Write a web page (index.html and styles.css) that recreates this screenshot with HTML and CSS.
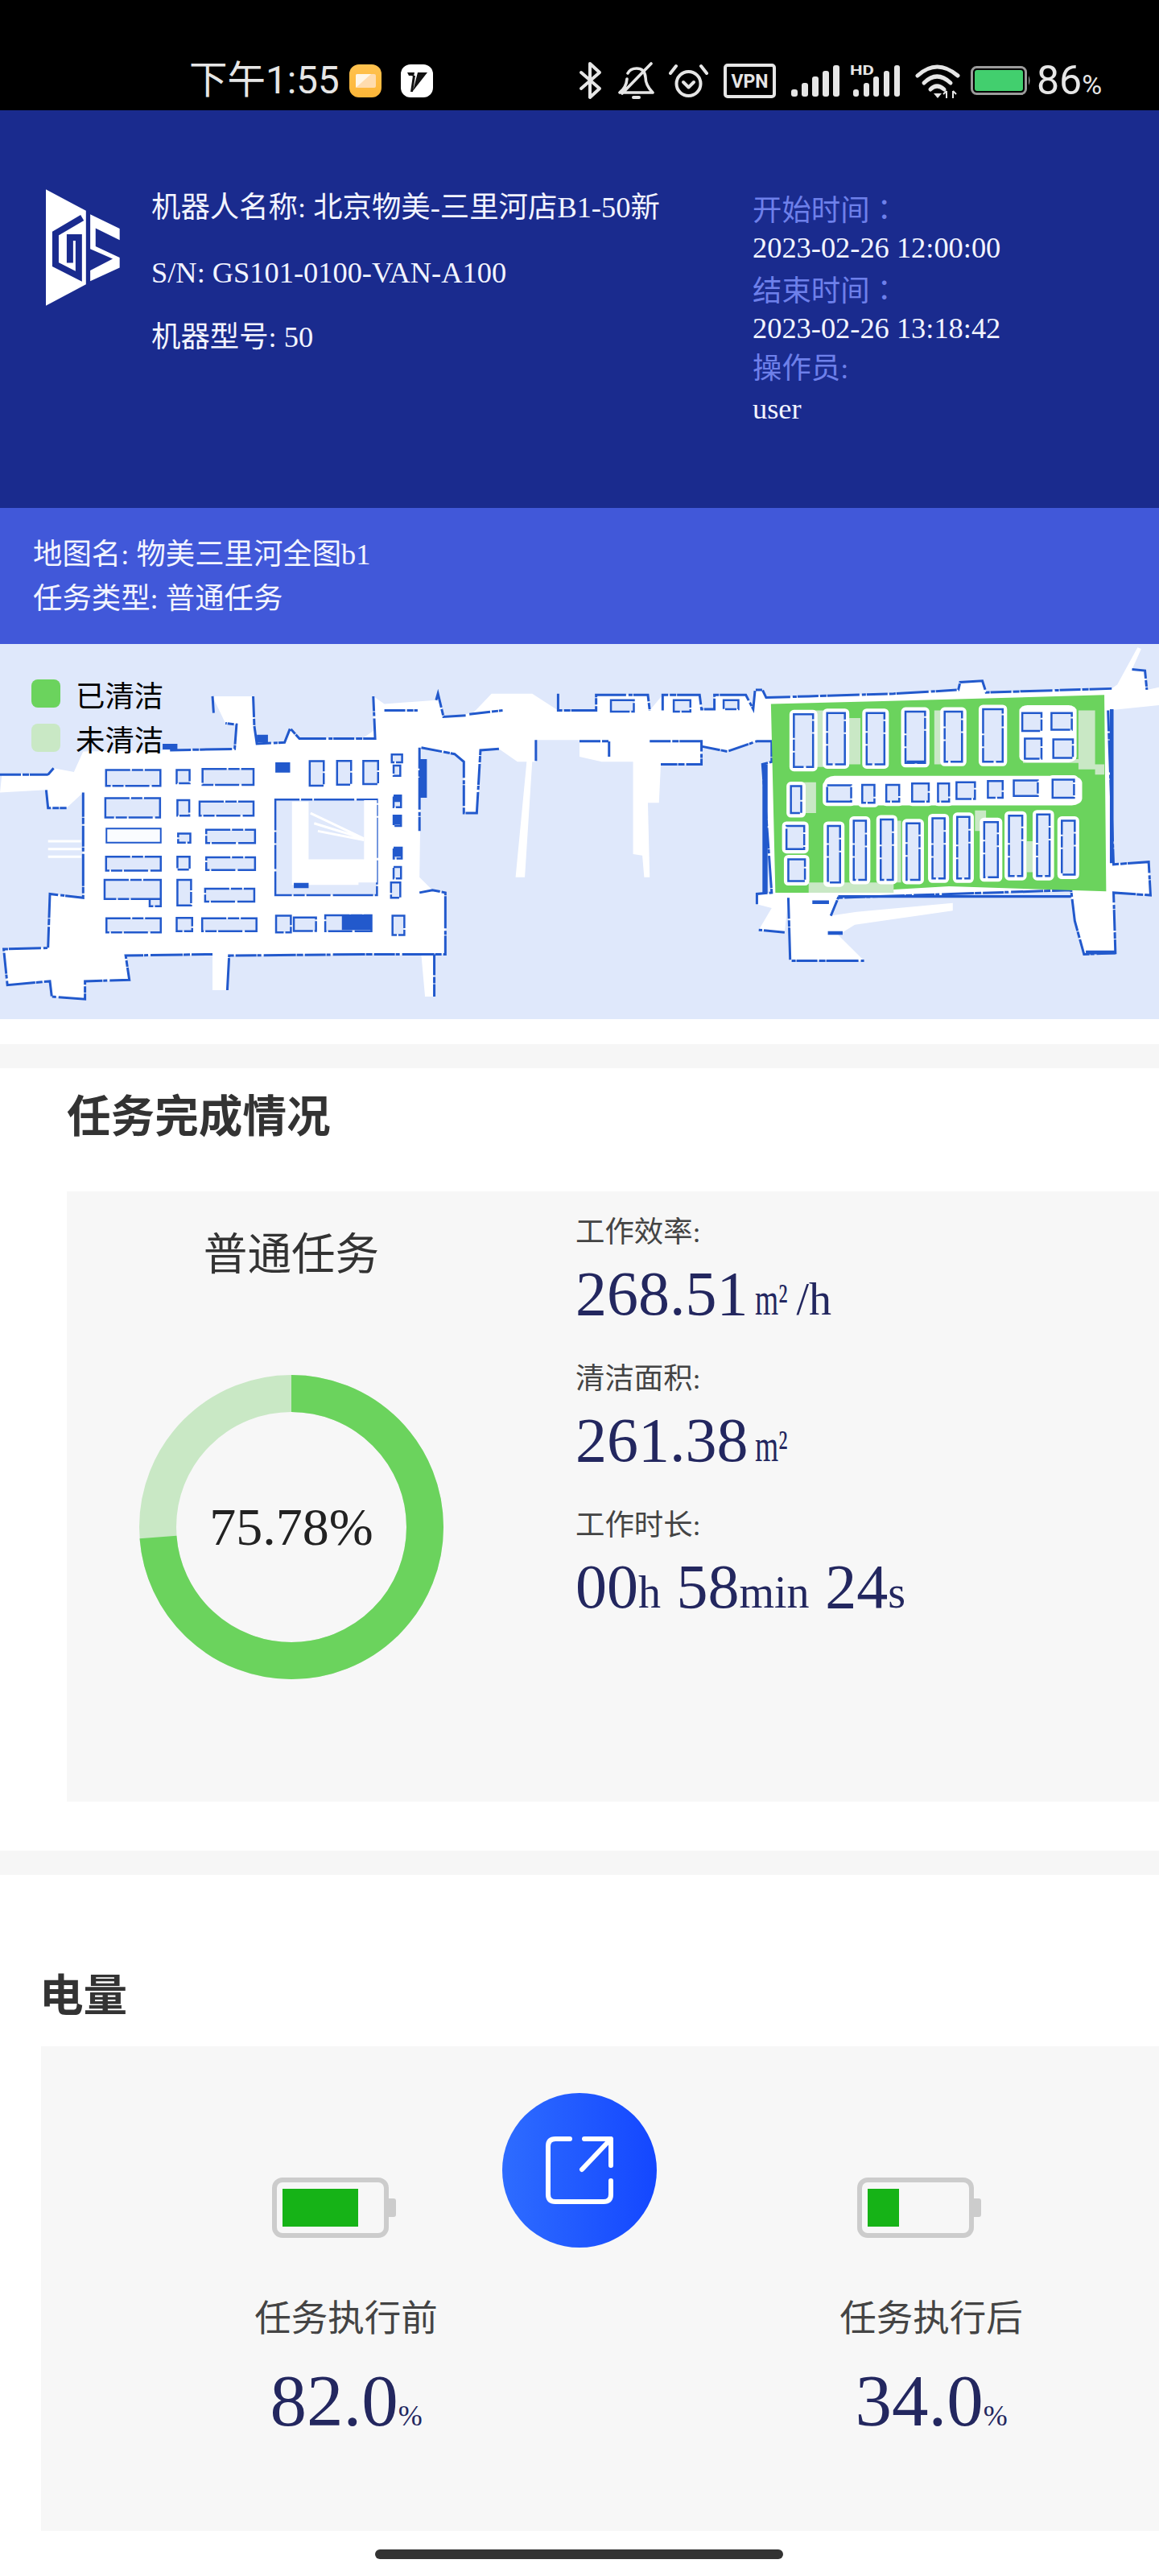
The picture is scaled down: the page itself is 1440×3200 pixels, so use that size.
FILE: index.html
```html
<!DOCTYPE html>
<html lang="zh-CN">
<head>
<meta charset="utf-8">
<title>任务报告</title>
<link rel="stylesheet" href="styles.css">
</head>
<body>
<div class="page">
  <div class="status">
    <span class="clock">下午1:55</span>
    <svg class="ic-note" viewBox="0 0 40 41"><defs><linearGradient id="og" x1="0" y1="0" x2="0" y2="1"><stop offset="0" stop-color="#ffc24f"/><stop offset="1" stop-color="#fdb638"/></linearGradient></defs><rect width="40" height="41" rx="12" fill="url(#og)"/><rect x="8" y="12" width="25" height="17" rx="2" fill="#ffdcae"/><path d="M8 29V14q0-2 2-2h17z" fill="#fff6e6"/></svg>
    <svg class="ic-v" viewBox="0 0 40 41"><rect width="40" height="41" rx="12" fill="#fff"/><path d="M8 10h9l-1 5-3-1h-3zM15 14l3 0-3 20h-3zM21 10h12L15 33z" fill="#111"/></svg>
    <svg class="ic-bt" viewBox="0 0 29 48"><path d="M3 14 26 34 14 45V3L26 14 3 34" fill="none" stroke="#e6e6e6" stroke-width="4" stroke-linecap="round" stroke-linejoin="round"/></svg>
    <svg class="ic-bell" viewBox="0 0 45 46"><path d="M12 14q3-6 11-6 10 0 11 11 0 10 9 19H5M2 38q8-6 9-17M41 2 5 39" fill="none" stroke="#e6e6e6" stroke-width="3.6" stroke-linecap="round" stroke-linejoin="round"/><rect x="17" y="42" width="11" height="4" rx="2" fill="#e6e6e6"/></svg>
    <svg class="ic-alarm" viewBox="0 0 49 44"><g fill="none" stroke="#e6e6e6" stroke-linecap="round" stroke-linejoin="round"><circle cx="24.500" cy="26" r="15" stroke-width="4"/><path d="M2 13 9 4M47 13 40 4" stroke-width="4"/><path d="M18 24l6.500 6.500L31 24" stroke-width="4"/></g></svg>
    <svg class="ic-vpn" viewBox="0 0 65 43"><rect x="2" y="2" width="61" height="39" rx="3" fill="none" stroke="#e6e6e6" stroke-width="4"/><text class="vpn-t" x="32.500" y="30" text-anchor="middle">VPN</text></svg>
    <svg class="ic-sig" viewBox="0 0 60 39"><g fill="#e6e6e6"><rect x="0" y="30" width="8" height="9" rx="3"/><rect x="13" y="22" width="8" height="17" rx="3"/><rect x="26" y="14" width="8" height="25" rx="3"/><rect x="39" y="7" width="8" height="32" rx="3"/><rect x="52" y="0" width="8" height="39" rx="3"/></g></svg>
    <svg class="ic-sig2" viewBox="0 -6 63 45"><text class="hd-t" x="0" y="12" textLength="30" lengthAdjust="spacingAndGlyphs">HD</text><g fill="#e6e6e6"><rect x="4" y="30" width="7" height="9" rx="3"/><rect x="17" y="22" width="7" height="17" rx="3"/><rect x="29" y="14" width="7" height="25" rx="3"/><rect x="42" y="7" width="7" height="32" rx="3"/><rect x="55" y="0" width="7" height="39" rx="3"/></g></svg>
    <svg class="ic-wifi" viewBox="0 0 57 43"><g fill="none" stroke="#e6e6e6" stroke-width="5" stroke-linecap="round"><path d="M3 15Q27-7 53 15"/><path d="M11 24Q27 8 44 24"/><path d="M19 32Q27 24 36 32"/></g><path d="M23 37h10l-5 6z" fill="#e6e6e6"/><path d="M39 34v9M47 34v9M35 38l4-4M47 34l4 4" fill="none" stroke="#e6e6e6" stroke-width="2"/></svg>
    <svg class="ic-batt" viewBox="0 0 75 36"><rect x="1.500" y="1.500" width="67" height="33" rx="6" fill="none" stroke="#9b9b9b" stroke-width="3"/><rect x="5" y="5" width="60" height="26" rx="3" fill="#42cf6e"/><path d="M72 12q3 6 0 12z" fill="#9b9b9b"/></svg>
    <span class="pct">86<small>%</small></span>
  </div>

  <header class="head">
    <svg class="logo" viewBox="82 75 277 435"><path fill="#fff" d="M82 75 232 155V430L82 510Z"/><path fill="none" stroke="#1a2b8e" stroke-width="24" stroke-linejoin="miter" d="M218 181 118 240V356L205 400V255H172V350"/><path fill="#fff" d="M248 168 358 222V265L268 220V288L358 330V368L248 418V378L332 335 248 298Z"/></svg>
    <div class="robot">
      <p>机器人名称: 北京物美-三里河店B1-50新</p>
      <p>S/N: GS101-0100-VAN-A100</p>
      <p>机器型号: 50</p>
    </div>
    <div class="times">
      <p class="tl">开始时间<span class="fw" lang="zh-Hant">：</span></p>
      <p>2023-02-26 12:00:00</p>
      <p class="tl">结束时间<span class="fw" lang="zh-Hant">：</span></p>
      <p>2023-02-26 13:18:42</p>
      <p class="tl">操作员:</p>
      <p>user</p>
    </div>
  </header>

  <div class="sub">
    <p>地图名: 物美三里河全图b1</p>
    <p>任务类型: 普通任务</p>
  </div>

  <div class="map">
    <svg class="map-svg" viewBox="0 800 1440 466">
      <defs>
        <path id="gr" d="M580 305h52v205h-52zM670 300h48v200h-48zM777 300h48v200h-48zM882 295h53v200h-53zM988 295h47v195h-47zM1092 285h53v205h-53zM572 585h28v105h-28zM670 582h65v63h-65zM765 580h33v70h-33zM830 580h35v65h-35zM900 575h45v70h-45zM970 575h30v70h-30zM1020 570h50v65h-50zM1105 565h40v65h-40zM1175 563h65v60h-65zM1280 560h58v70h-58zM672 740h33v220h-33zM742 720h33v230h-33zM815 715h33v235h-33zM885 730h35v220h-35zM955 710h33v235h-33zM1022 705h33v240h-33zM1095 725h37v215h-37zM1162 700h36v235h-36zM1238 695h34v240h-34zM1305 720h35v210h-35zM560 740h48v90h-48zM565 870h45v85h-45z"/>
      </defs>
      <g class="zoomL">
        <path class="floor" d="M225 450 460 445 635 440 640 345 610 340 575 235H685L688 350 695 420 770 415 785 360 810 400H980L1010 370V235L1040 265 1180 250 1185 225 1200 315 1280 300 1330 225H1440L1510 290H1568V405H1450V490H1440L1420 940H1395L1425 490H1400L1350 440 1300 445 1290 690H1255V490L1230 460 1140 435 1135 940 1170 990 1205 1000V1240H1175V1405H1150L1140 1245 1000 1240 620 1245 615 1380H575V1240L340 1245 350 1340 230 1345V1415L140 1405 135 1345 20 1360 10 1220 130 1215 135 1005 225 1020V610L180 670H130L125 600 0 610 5 540H130L145 515 200 530Z"/>
        <path class="wall" d="M460 445 635 440 640 345 610 340M575 235 578 300M685 235 688 350 695 420 770 415 785 360 810 400H1015L1010 235M1040 290H1130M1180 250 1185 225 1200 315 1260 310M1270 305 1360 290M1510 225V290H1568M1450 405V490M1140 435 1230 460 1255 490V690H1290L1300 445 1350 440M1135 435V760M1135 1000 1170 990 1205 1000V1240H1140L1000 1240 620 1245 615 1380M575 1240 340 1245 350 1340 230 1345V1415L140 1405 135 1345 20 1360 10 1220 130 1215 135 1005 225 1020V610M130 540 145 515M0 540H130M125 600 130 670H180M1175 1240V1405"/>
        <path class="room" d="M287 522h147v62h-147zM478 522h35v52h-35zM548 518h138v62h-138zM838 488h38v95h-38zM912 487h38v92h-38zM983 487h40v90h-40zM1060 462h28v30h-28zM1065 505h18v40h-18zM285 632h148v75h-148zM480 640h32v60h-32zM540 645h146v55h-146zM1065 622h20v45h-20zM1065 700h20v40h-20zM482 770h33v35h-33zM558 755h132v52h-132zM287 860h148v54h-148zM480 860h33v50h-33zM558 862h132v50h-132zM1065 825h22v42h-22zM1065 900h20v45h-20zM283 950h152v75h-152zM405 1025h30v28h-30zM480 950h37v100h-37zM555 985h133v50h-133zM1058 960h25v60h-25zM288 1100h147v55h-147zM478 1098h42v52h-42zM547 1100h147v50h-147zM747 1090h40v65h-40zM795 1097h60v52h-60zM880 1088h125v62h-125zM1062 1090h32v75h-32zM745 637h275v373H745z"/>
        <path class="room-w" d="M288 750h147v55h-147z"/>
        <path class="white" d="M790 645h45v225h150V640h35v320h-50v10H790Z"/>
        <path class="solid" d="M745 492h40v40h-40zM795 962h40v20h-40zM925 1085h80v60h-80zM1065 622h20v25h-20zM1065 700h20v35h-20zM1065 825h20v35h-20zM1135 480h20v150h-20zM695 385h30v30h-30zM440 420h40v22h-40z"/>
        <path class="ray" d="M840 690 985 790M850 730 985 790M860 760 985 795M130 800h90M130 830h90M130 860h90"/>
      </g>
      <g class="zoomR">
        <path class="floor" d="M0 290H45V230H185L190 290 225 230H325L330 285H365V230H450L470 285 475 210H495L505 240 620 235 850 225 1025 210 1030 180 1090 175 1100 220 1440 205 1455 190 1510 45 1520 50 1495 130 1530 135 1535 210 1568 200V270L1430 290 1445 890 1540 880 1545 1010 1445 1000 1450 1235 1365 1240 1340 1110 1330 990 1005 1005 700 1020 680 1090 750 1075 1010 1040V1070L745 1125 700 1165 770 1265H570L565 1020 555 1155 485 1145 520 1060 480 1045V1005L520 1000 495 500 520 490V410H480L400 450 330 430V500H220L215 650H185L190 940H175L170 855 145 850V490H60L0 470Z"/>
        <path class="wall" d="M0 290H45V230H185L190 290M225 290V230H325L330 285H365V230H450L470 285 475 210H495L505 240 620 235 850 225 1025 210 1030 180 1090 175 1100 220 1440 205M1495 130 1530 135 1535 210M1430 290 1445 890 1540 880 1545 1010 1445 1000 1450 1235 1365 1240 1340 1110 1330 990 1005 1005 700 1020 680 1090M565 1020 570 1265H770M555 1155 485 1145M480 1045V1005L520 1000 495 500 520 490V410H480L400 450 330 430M0 410H80V470M190 410H330V500H220"/>
        <path class="room" d="M85 250h62v45H85zM255 250h45v45h-45zM390 250h40v35h-40z"/>
        <path class="green" d="M518 265 800 255 1420 230 1425 995 1000 975 700 1000 530 1000Z"/>
        <path class="pale" d="M620 290h40v220h-40zM720 320h40v180h-40zM960 290h25v210h-25zM1350 290h45v230h-45zM605 570h35v120h-35zM1200 480h150v15h-150zM830 720h40v240h-40zM1070 680h30v80h-30zM1210 800h30v120h-30zM620 960h230v40H620zM1395 500h25v40h-25z"/>
        <rect class="white" x="662" y="545" width="698" height="115" rx="28"/>
        <rect class="white" x="1190" y="270" width="155" height="222" rx="22"/>
        <use href="#gr" class="halo"/>
        <use href="#gr" class="room"/>
        <path class="room" d="M1198 300h52v70h-52zM1277 300h55v65h-55zM1205 400h45v78h-45zM1282 403h53v72h-53z"/>
        <path class="solid" d="M495 500h14v500h-14zM1435 285h10v600h-10zM700 1010h630v10H700zM1370 1225h80v15h-80zM885 485h50v12h-50zM630 1030h45v14h-45zM672 1150h40v14h-40z"/>
      </g>
    </svg>
    <ul class="legend">
      <li><i class="sw sw-done"></i>已清洁</li>
      <li><i class="sw sw-todo"></i>未清洁</li>
    </ul>
  </div>

  <div class="strip strip-a"></div>

  <section class="task">
    <h2 class="h-task">任务完成情况</h2>
    <div class="task-card">
      <div class="task-left">
        <div class="task-name">普通任务</div>
        <svg class="donut" viewBox="0 0 378 378">
          <circle class="d-bg" cx="189" cy="189" r="166"/>
          <circle class="d-fg" cx="189" cy="189" r="166" pathLength="100" transform="rotate(-90 189 189)"/>
          <text class="d-t" x="189" y="211" text-anchor="middle">75.78%</text>
        </svg>
      </div>
      <div class="metrics">
        <div class="m-l">工作效率:</div>
        <div class="m-v">268.51<span class="u m2">m²</span><span class="u">/h</span></div>
        <div class="m-l">清洁面积:</div>
        <div class="m-v">261.38<span class="u m2">m²</span></div>
        <div class="m-l">工作时长:</div>
        <div class="m-v">00<span class="u">h</span> 58<span class="u">min</span> 24<span class="u">s</span></div>
      </div>
    </div>
  </section>

  <div class="strip strip-b"></div>

  <section class="power">
    <h2 class="h-power">电量</h2>
    <div class="power-card">
      <div class="p-col">
        <div class="batt"><div class="batt-fill" style="width:82%"></div></div>
        <div class="p-l">任务执行前</div>
        <div class="p-v">82.0<span class="pu">%</span></div>
      </div>
      <div class="p-col">
        <div class="batt"><div class="batt-fill" style="width:34%"></div></div>
        <div class="p-l">任务执行后</div>
        <div class="p-v">34.0<span class="pu">%</span></div>
      </div>
      <div class="share">
        <svg class="share-ic" viewBox="0 0 84 84"><path d="M30 3H12Q3 3 3 12V72Q3 81 12 81H72Q81 81 81 72V55M48 3H81V36M81 3 45 41" fill="none" stroke="#fff" stroke-width="6" stroke-linecap="round" stroke-linejoin="round"/></svg>
      </div>
    </div>
  </section>

  <div class="home"></div>
</div>
</body>
</html>
```
FILE: styles.css
```css
* { box-sizing: border-box; }
html, body { margin: 0; padding: 0; background: #fff; }
p, h2, ul { margin: 0; padding: 0; }
.page {
  width: 1440px;
  height: 3200px;
  overflow: hidden;
  font-family: "Liberation Serif", "Noto Sans CJK SC", serif;
  font-size: 36.4px;
  color: #333;
}

/* status bar */
.status {
  height: 137px;
  background: #000;
  display: flex;
  align-items: center;
  padding: 63px 0 0 235px;
  color: #e6e6e6;
  font-family: Roboto, "Noto Sans CJK SC", sans-serif;
}
.status svg { flex: none; display: block; }
.clock { font-size: 47.5px; line-height: 74px; width: 185px; white-space: nowrap; }
.ic-note { width: 40px; height: 41px; margin-left: 14px; }
.ic-v { width: 40px; height: 41px; margin-left: 24px; }
.ic-bt { width: 29px; height: 48px; margin-left: 181px; }
.ic-bell { width: 45px; height: 46px; margin-left: 20px; }
.ic-alarm { width: 49px; height: 44px; margin-left: 18px; }
.ic-vpn { width: 65px; height: 43px; margin-left: 19px; }
.ic-sig { width: 60px; height: 39px; margin-left: 19px; }
.ic-sig2 { width: 63px; height: 45px; margin: -6px 0 0 13px; }
.ic-wifi { width: 57px; height: 43px; margin-left: 18px; }
.ic-batt { width: 75px; height: 36px; margin-left: 12px; }
.pct { font-size: 50px; line-height: 74px; margin: 5px 0 0 7px; white-space: nowrap; }
.pct small { font-size: 34px; }
.vpn-t { font: bold 23px Roboto, sans-serif; fill: #e6e6e6; }
.hd-t { font: bold 17px Roboto, sans-serif; fill: #e6e6e6; }

/* header */
.head {
  height: 494px;
  background: #1a2b8e;
  color: #f2f4ff;
  display: flex;
  align-items: flex-start;
  padding: 81px 0 0 57px;
}
.logo { width: 92px; height: 145px; margin-top: 17px; flex: none; }
.robot { width: 747px; margin-left: 39px; flex: none; }
.robot p { line-height: 80.5px; white-space: nowrap; }
.times { margin-top: 15px; }
.times p { line-height: 50px; height: 50px; white-space: nowrap; }
.times .tl { color: #6e80ea; }
.fw { font-family: "Noto Sans CJK TC", sans-serif; }

.sub {
  height: 169px;
  background: #4158d9;
  color: #f2f4ff;
  padding: 31px 0 0 41px;
}
.sub p { line-height: 55px; }

/* map */
.map { position: relative; height: 466px; background: #dfe8fb; overflow: hidden; }
.map-svg { display: block; width: 1440px; height: 466px; }
.zoomL { transform: translate(0, 790px) scale(.4592, .3189); }
.zoomR { transform: translate(720px, 790px) scale(.4592, .3189); }
.map-svg path, .map-svg rect, .map-svg use { vector-effect: non-scaling-stroke; }
.floor { fill: #fff; stroke: none; }
.wall { fill: none; stroke: #2259cc; stroke-width: 3; stroke-dasharray: 26 2 8 1 40 3 5 1; }
.room { fill: #dfe8fb; stroke: #2259cc; stroke-width: 2.5; stroke-dasharray: 30 2 14 2 50 3; }
.room-w { fill: #fafcff; stroke: #2259cc; stroke-width: 2; }
.white { fill: #fff; stroke: none; }
.solid { fill: #2259cc; stroke: none; }
.ray { fill: none; stroke: #fff; stroke-width: 3; }
.green { fill: #6bd35d; }
.pale { fill: #c9e8c5; }
.halo { fill: #fff; stroke: #fff; stroke-width: 11; stroke-linejoin: round; }

.legend {
  position: absolute;
  left: 39px;
  top: 44px;
  list-style: none;
  color: #000;
}
.legend li { display: flex; align-items: center; height: 35px; margin-bottom: 20px; white-space: nowrap; }
.sw { width: 36px; height: 35px; border-radius: 8px; margin-right: 19px; flex: none; }
.sw-done { background: #6bd35d; }
.sw-todo { background: #c9e8c5; }

.strip { background: #f6f6f6; }
.strip-a { height: 30px; margin-top: 31px; }
.strip-b { height: 30px; margin-top: 61px; }

/* task */
.task { padding-left: 83px; }
.h-task { font-size: 54.6px; line-height: 80px; height: 80px; margin-top: 21px; color: #333; font-weight: bold; white-space: nowrap; }
.task-card {
  margin-top: 52px;
  height: 758px;
  background: #f7f7f7;
  display: grid;
  grid-template-columns: 558px 1fr;
  column-gap: 75px;
}
.task-left { display: flex; flex-direction: column; align-items: center; padding-top: 44px; }
.task-name { font-size: 54.6px; line-height: 70px; }
.donut { width: 378px; height: 378px; margin-top: 114px; display: block; flex: none; }
.d-bg, .d-fg { fill: none; stroke-width: 46; }
.d-bg { stroke: #c9e8c5; }
.d-fg { stroke: #6bd35d; stroke-dasharray: 73.8 100; }
.d-t { font-size: 66px; fill: #222; }
.metrics { padding-top: 26px; margin-left: -1px; }
.m-l { line-height: 50px; color: #444; margin-bottom: 6px; }
.m-v { font-size: 78px; line-height: 90px; height: 90px; color: #23275f; margin-bottom: 36px; white-space: nowrap; }
.u { font-size: 56px; }
.m2 { display: inline-block; width: 52px; margin-left: 8px; transform: scaleX(.67); transform-origin: left center; }

/* power */
.h-power { font-size: 54.6px; line-height: 80px; height: 80px; margin: 111px 0 0 49px; color: #333; font-weight: bold; }
.power-card {
  position: relative;
  margin: 22px 0 0 51px;
  height: 602px;
  background: #f7f7f7;
  display: flex;
  column-gap: 277px;
  padding: 163px 0 0 154px;
}
.p-col { width: 450px; display: flex; flex-direction: column; align-items: center; flex: none; }
.batt {
  position: relative;
  width: 145px;
  height: 75px;
  border: 6px solid #ccc;
  border-radius: 13px;
  padding: 8px 11px 8px 7px;
  margin-right: 39px;
  flex: none;
}
.batt::after {
  content: "";
  position: absolute;
  left: 139px;
  top: 20px;
  width: 9px;
  height: 23px;
  border-radius: 0 3px 3px 0;
  background: #ccc;
}
.batt-fill { height: 100%; background: #16b317; }
.p-l { font-size: 45.5px; line-height: 60px; margin-top: 71px; color: #444; white-space: nowrap; }
.p-v { font-size: 91px; line-height: 100px; margin-top: 22px; color: #23275f; white-space: nowrap; }
.pu { font-size: 36px; }
.share {
  position: absolute;
  left: 573px;
  top: 58px;
  width: 192px;
  height: 192px;
  border-radius: 50%;
  background: linear-gradient(90deg, #2e6cff, #1447ff);
  display: flex;
  align-items: center;
  justify-content: center;
}
.share-ic { width: 84px; height: 84px; display: block; }

.home {
  width: 507px;
  height: 12px;
  border-radius: 6px;
  background: #333;
  margin: 23px 0 0 466px;
}
```
